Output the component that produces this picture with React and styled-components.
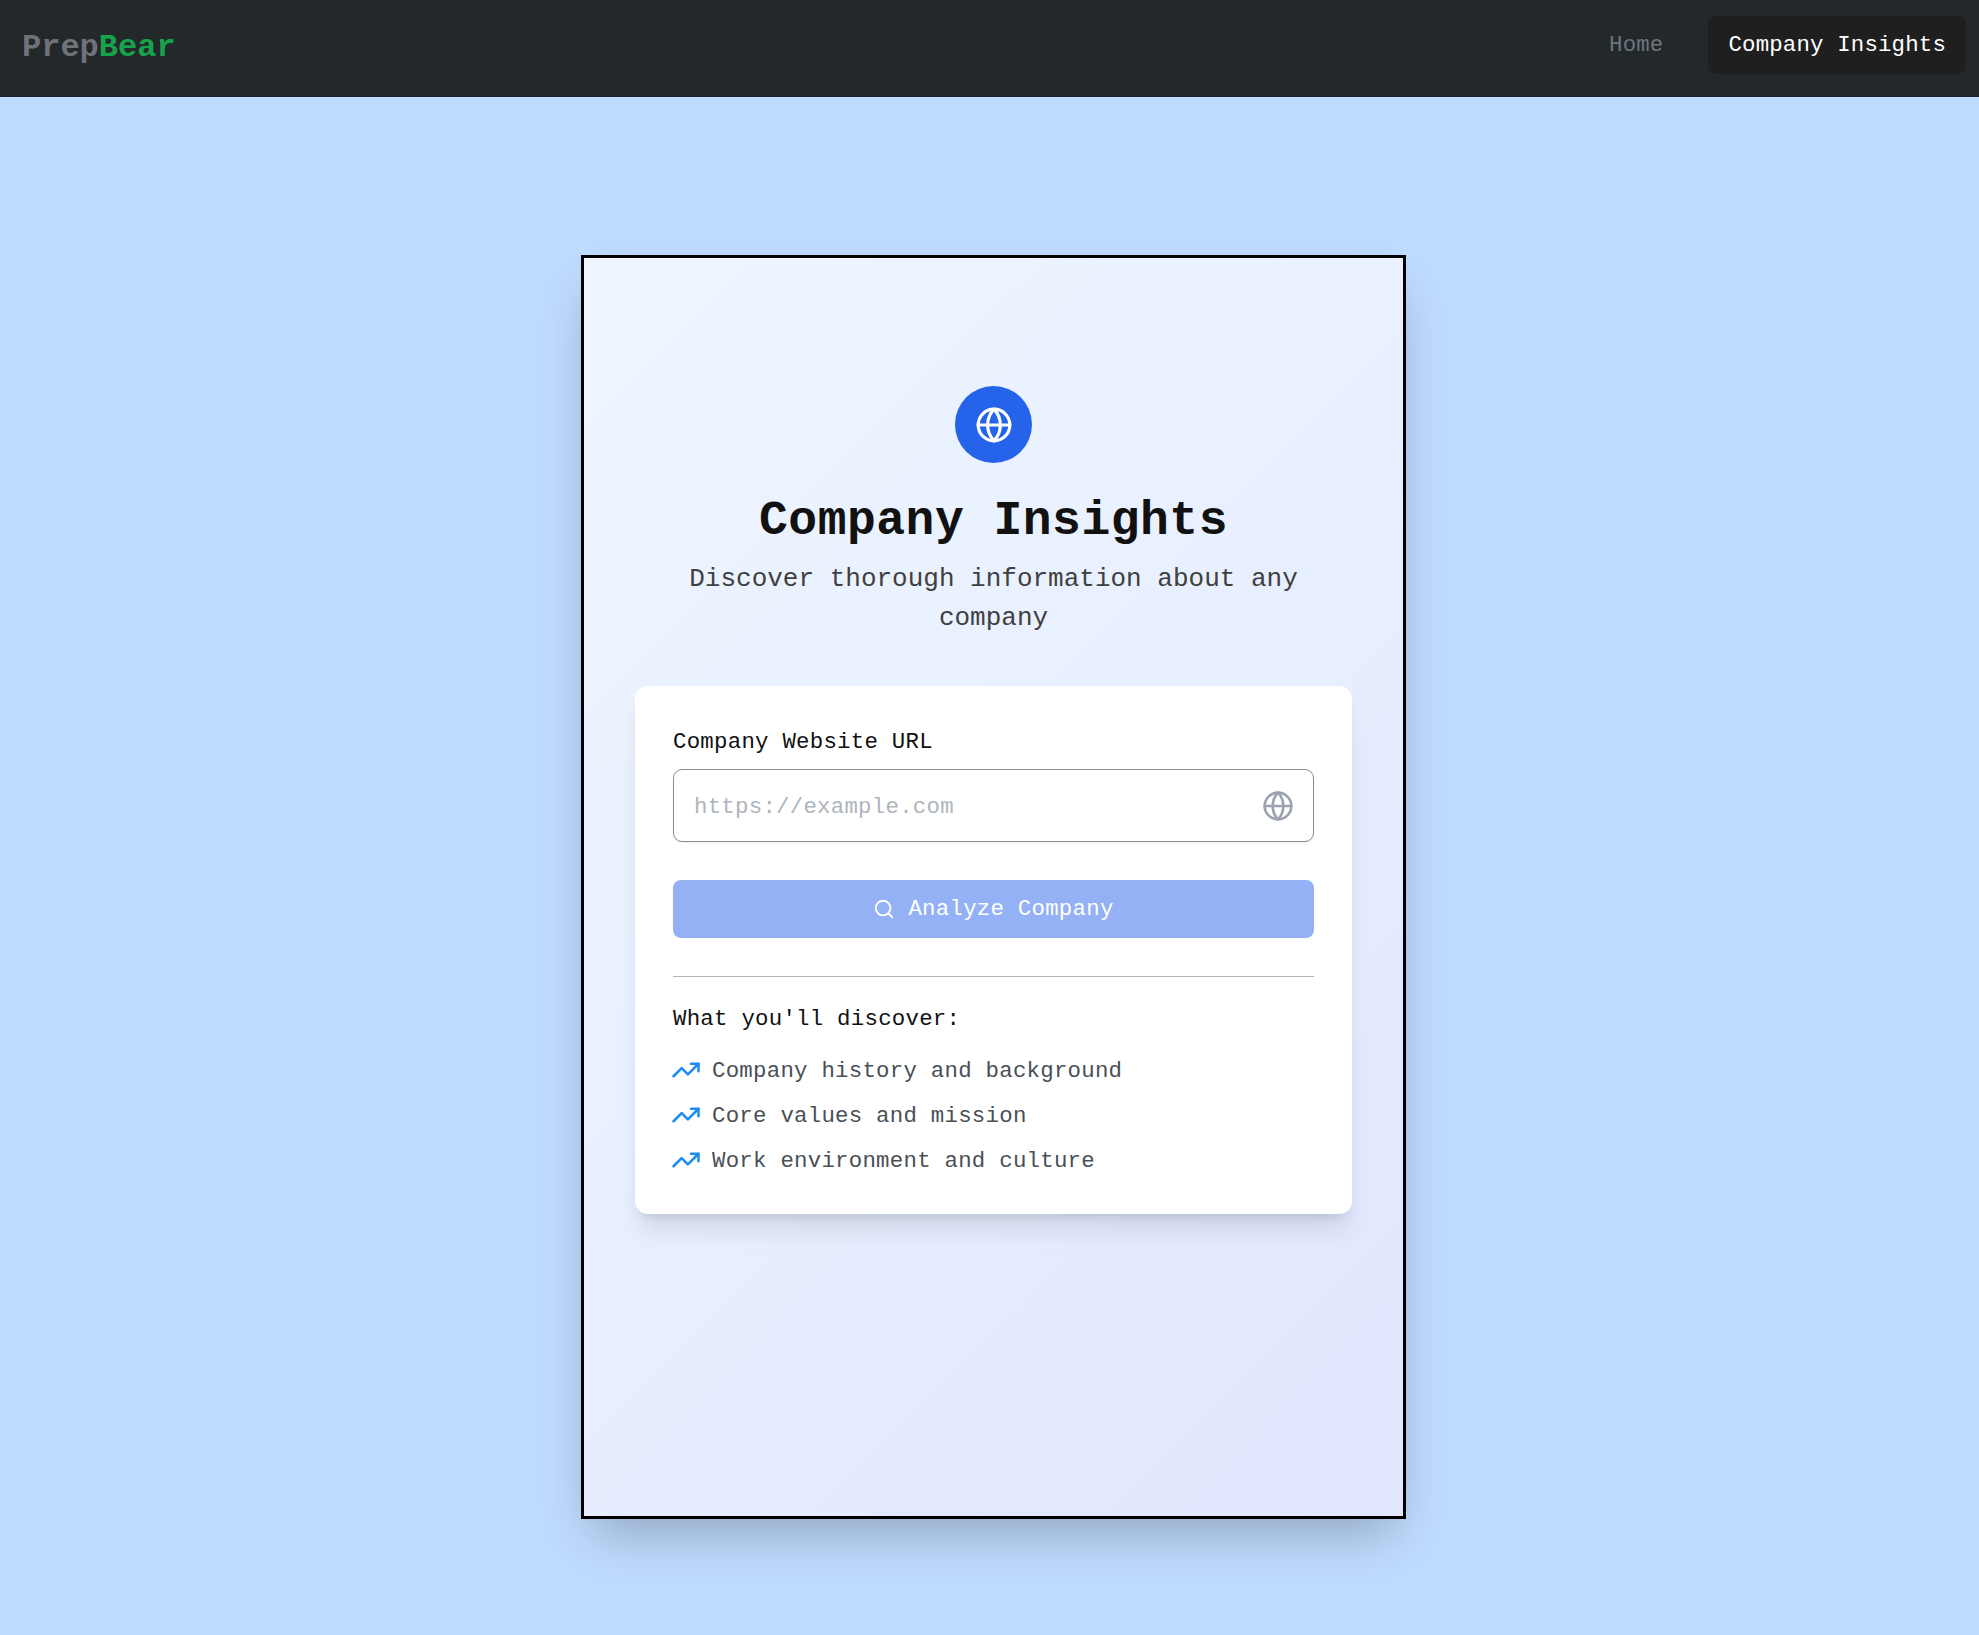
import React from "react";
import styled, { createGlobalStyle } from "styled-components";
import { Globe, Search, TrendingUp } from "lucide-react";

const mono = `"Liberation Mono", "DejaVu Sans Mono", monospace`;

const GlobalStyle = createGlobalStyle`
  html, body {
    margin: 0;
    padding: 0;
    background: #bfdbfe;
    font-family: ${mono};
  }
  * {
    box-sizing: border-box;
  }
`;

const Page = styled.div`
  min-height: 1635px;
  background: #bfdbfe;
  display: flex;
  flex-direction: column;
`;

const Nav = styled.nav`
  height: 97px;
  background: #23282b;
  border-bottom: 1px solid #1f2326;
  display: flex;
  align-items: center;
  padding: 0 13px 6px 22px;
`;

const Logo = styled.div`
  font-size: 32px;
  font-weight: 700;
  color: #6f7379;
  margin-top: 4px;
`;

const Green = styled.span`
  color: #16a34a;
`;

const Links = styled.div`
  margin-left: auto;
  display: flex;
  align-items: center;
  gap: 25px;
`;

const NavLink = styled.a`
  height: 58px;
  display: flex;
  align-items: center;
  padding: 0 20px;
  border-radius: 8px;
  font-size: 22.4px;
  letter-spacing: 0.16px;
  color: ${(p) => (p.$active ? "#ffffff" : "#6c757d")};
  background: ${(p) => (p.$active ? "#1f1f1f" : "transparent")};
`;

const Main = styled.main`
  display: flex;
  justify-content: center;
  padding: 158px 0 0 8px;
`;

const Card = styled.section`
  width: 825px;
  height: 1264px;
  border: 3px solid #000;
  background: linear-gradient(135deg, #eff6ff 0%, #e0e7ff 100%);
  box-shadow: 0 25px 50px -12px rgba(0, 0, 0, 0.25);
  display: flex;
  flex-direction: column;
  align-items: center;
  padding: 128px 51px 0;
`;

const IconCircle = styled.div`
  width: 77px;
  height: 77px;
  border-radius: 50%;
  background: #2563eb;
  color: #fff;
  display: flex;
  align-items: center;
  justify-content: center;
`;

const Title = styled.h1`
  margin: 30px 0 0;
  font-size: 48px;
  line-height: 56px;
  font-weight: 700;
  letter-spacing: 0.5px;
  color: #111;
`;

const Subtitle = styled.p`
  margin: 11px 0 0;
  width: 640px;
  text-align: center;
  font-size: 26px;
  line-height: 39px;
  color: #404040;
`;

const Panel = styled.div`
  width: 717px;
  height: 528px;
  margin-top: 48px;
  padding: 41px 38px 38px;
  background: #fff;
  border-radius: 13px;
  box-shadow: 0 20px 25px -5px rgba(0, 0, 0, 0.1), 0 8px 10px -6px rgba(0, 0, 0, 0.1);
  display: flex;
  flex-direction: column;
`;

const Label = styled.label`
  font-size: 22.4px;
  line-height: 30px;
  letter-spacing: 0.24px;
  color: #111;
`;

const Field = styled.div`
  position: relative;
  margin-top: 12px;
`;

const UrlInput = styled.input`
  width: 100%;
  height: 73px;
  padding: 3px 60px 0 20px;
  border: 1px solid #868e96;
  border-radius: 9px;
  outline: none;
  background: #fff;
  box-shadow: 0 1px 2px rgba(0, 0, 0, 0.06);
  font-family: ${mono};
  font-size: 22.4px;
  letter-spacing: 0.24px;

  &::placeholder {
    color: #adb5bd;
    opacity: 1;
  }
`;

const FieldIcon = styled.span`
  position: absolute;
  top: 21px;
  right: 20px;
  display: flex;
  color: #9ca3af;
`;

const AnalyzeButton = styled.button`
  margin-top: 38px;
  height: 58px;
  border: 0;
  border-radius: 8px;
  background: #93b1f4;
  color: #fff;
  display: flex;
  align-items: center;
  justify-content: center;
  gap: 13px;
  font-family: ${mono};
  font-size: 22.4px;
  letter-spacing: 0.24px;
`;

const Divider = styled.hr`
  width: 100%;
  margin: 38px 0 0;
  border: 0;
  border-top: 1px solid #b5b5b5;
`;

const Heading = styled.h3`
  margin: 27px 0 0;
  font-size: 22.4px;
  line-height: 30px;
  font-weight: 400;
  letter-spacing: 0.24px;
  color: #111;
`;

const List = styled.ul`
  list-style: none;
  margin: 22px 0 0;
  padding: 0;
  display: flex;
  flex-direction: column;
  gap: 15px;
`;

const Item = styled.li`
  display: flex;
  align-items: center;
  gap: 11px;
  font-size: 22.4px;
  line-height: 30px;
  letter-spacing: 0.24px;
  color: #495057;

  svg {
    color: #1c8cf5;
    flex: none;
    margin: -3px 0 0 -2px;
  }
`;

const points = [
  "Company history and background",
  "Core values and mission",
  "Work environment and culture",
];

const App = () => {
  return (
    <Page>
      <GlobalStyle />
      <Nav>
        <Logo>
          Prep<Green>Bear</Green>
        </Logo>
        <Links>
          <NavLink>Home</NavLink>
          <NavLink $active>Company Insights</NavLink>
        </Links>
      </Nav>
      <Main>
        <Card>
          <IconCircle>
            <Globe size={38} strokeWidth={2} />
          </IconCircle>
          <Title>Company Insights</Title>
          <Subtitle>Discover thorough information about any company</Subtitle>
          <Panel>
            <Label>Company Website URL</Label>
            <Field>
              <UrlInput placeholder="https://example.com" />
              <FieldIcon>
                <Globe size={32} strokeWidth={2} />
              </FieldIcon>
            </Field>
            <AnalyzeButton>
              <Search size={22} />
              Analyze Company
            </AnalyzeButton>
            <Divider />
            <Heading>What you'll discover:</Heading>
            <List>
              {points.map((text) => (
                <Item key={text}>
                  <TrendingUp size={30} strokeWidth={2} />
                  {text}
                </Item>
              ))}
            </List>
          </Panel>
        </Card>
      </Main>
    </Page>
  );
};

export default App;
